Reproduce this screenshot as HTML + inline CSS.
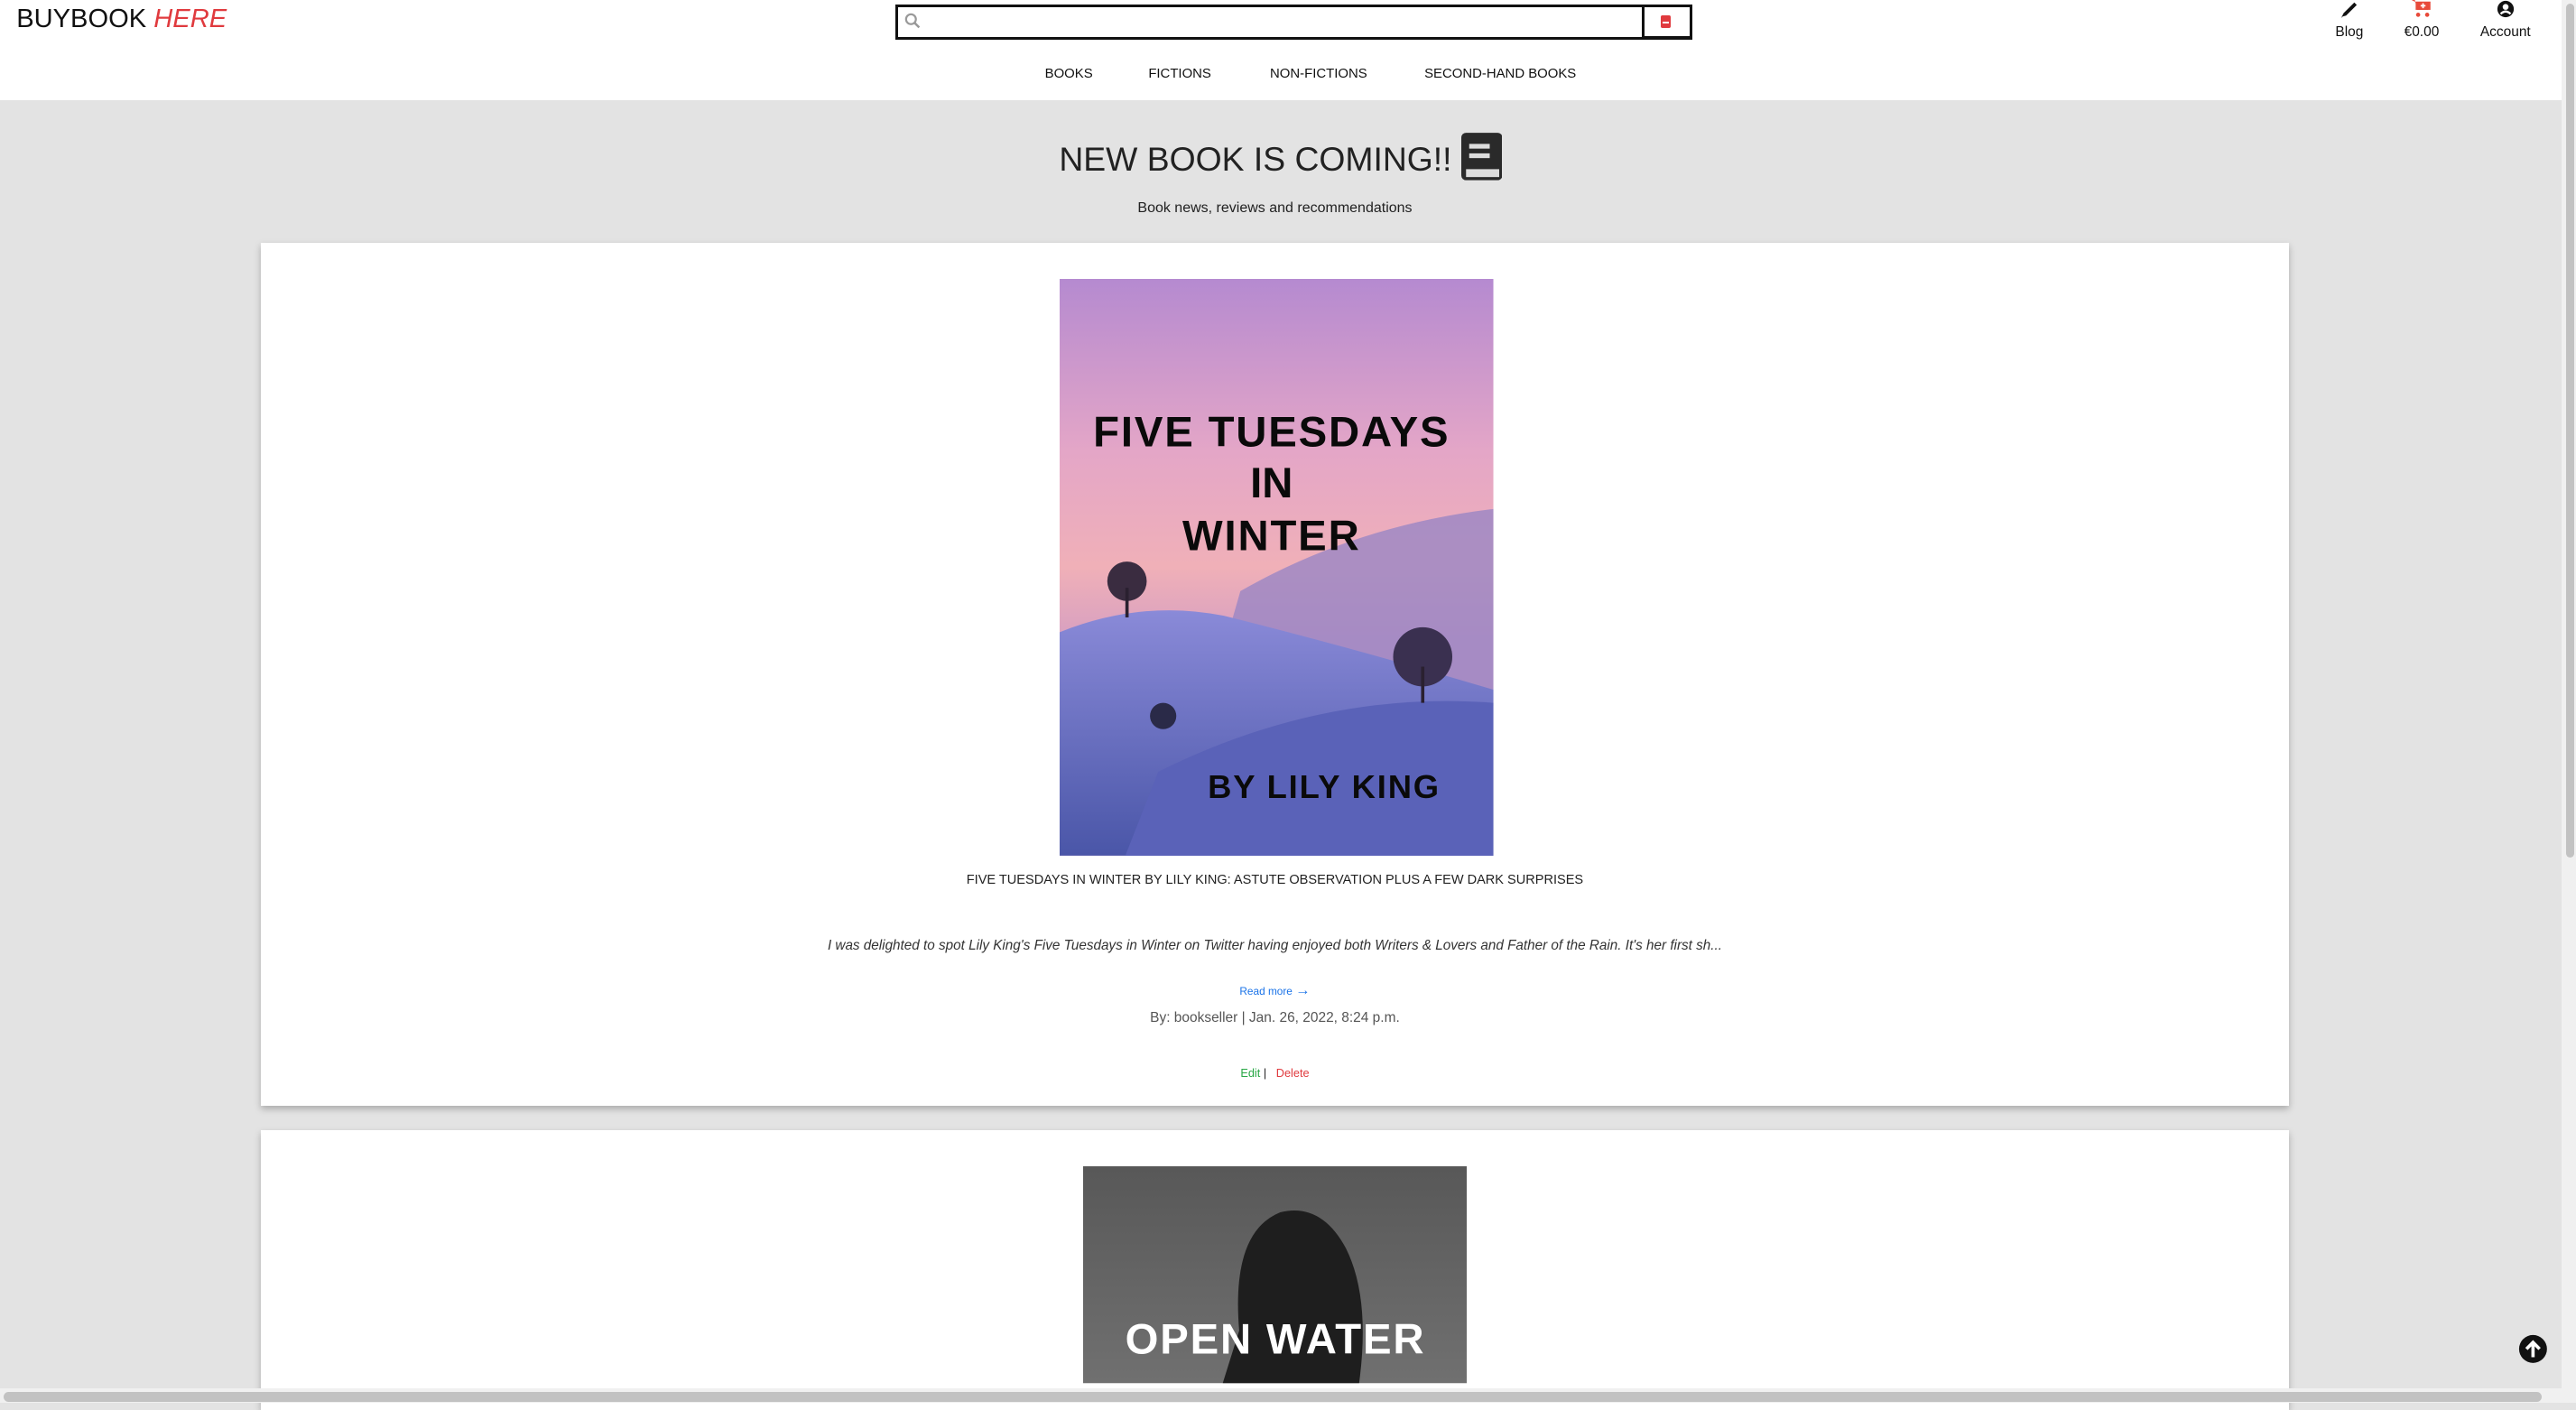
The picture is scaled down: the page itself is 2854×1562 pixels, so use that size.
<!DOCTYPE html>
<html><head><meta charset="utf-8">
<style>
html{zoom:1.8202}
*{box-sizing:border-box;margin:0;padding:0}
body{width:1568px;height:854px;overflow:hidden;background:#e3e3e3;font-family:"Liberation Sans",Arial,sans-serif;position:relative;color:#222}
.abs{position:absolute}
header{position:absolute;left:0;top:0;width:1559px;height:61px;background:#fff}
.logo{left:10px;top:3px;font-size:16px;color:#111}
.logo i{color:#e03a3e}
.search{left:545px;top:3px;width:485px;height:21px;border:2px solid #111;background:#fff}
.search .btn{position:absolute;right:0;top:-2px;width:29px;height:21px;border:2px solid #111;border-right:none}
.nav{top:40px;font-size:8.2px;color:#111}
.ico{top:0;font-size:8.5px;text-align:center;color:#111}
.title{left:0;width:1559px;top:81px;text-align:center;font-size:20.5px;color:#222}
.sub{left:0;width:1552px;top:122px;text-align:center;font-size:8.8px;color:#222}
.card{background:#fff;box-shadow:0 2px 4px rgba(0,0,0,.25);left:159px;width:1234px}
.c{position:absolute;left:0;width:100%;text-align:center}
</style></head><body>
<header>
<div class="abs logo">BUYBOOK <i>HERE</i></div>
<div class="abs search">
<svg class="abs" style="left:4px;top:3px" width="10" height="10" viewBox="0 0 10 10"><circle cx="4" cy="4" r="3" fill="none" stroke="#999" stroke-width="1.2"/><line x1="6" y1="6" x2="9" y2="9" stroke="#999" stroke-width="1.4"/></svg>
<div class="btn"><div style="position:absolute;left:10px;top:5px;width:6px;height:8px;background:#e03a3e;border-radius:1px"></div><div style="position:absolute;left:11px;top:9px;width:4px;height:1px;background:#fff"></div></div>
</div>
<div class="abs nav" style="left:636px">BOOKS</div>
<div class="abs nav" style="left:699px">FICTIONS</div>
<div class="abs nav" style="left:773px">NON-FICTIONS</div>
<div class="abs nav" style="left:867px">SECOND-HAND BOOKS</div>
<div class="abs ico" style="left:1419px;width:22px"><svg width="12" height="11" viewBox="0 0 12 11"><path d="M2 10 L1 11 L2.5 8 L9 1.5 L10.5 3 L4 9.5Z" fill="#111"/></svg><div style="margin-top:1px">Blog</div></div>
<div class="abs ico" style="left:1460px;width:28px"><svg width="14" height="11" viewBox="0 0 14 11"><path d="M1 0H3L4.5 6H11L12.5 1H3" fill="#e84a3a"/><rect x="3.5" y="1" width="9" height="5" fill="#e84a3a"/><circle cx="5" cy="9" r="1.3" fill="#e84a3a"/><circle cx="10.5" cy="9" r="1.3" fill="#e84a3a"/><path d="M8 2v3M6.5 3.5h3" stroke="#fff" stroke-width="1"/></svg><div style="margin-top:1px">€0.00</div></div>
<div class="abs ico" style="left:1507px;width:36px"><svg width="11" height="11" viewBox="0 0 11 11"><circle cx="5.5" cy="5.5" r="5" fill="#111"/><circle cx="5.5" cy="4.2" r="1.8" fill="#fff"/><path d="M2.5 8.5Q5.5 5.5 8.5 8.5" stroke="#fff" stroke-width="1.3" fill="none"/></svg><div style="margin-top:1px">Account</div></div>
</header>
<div class="abs" style="left:1559px;top:0;width:9px;height:854px;background:#f0f0f0"></div>
<div class="abs" style="left:1562px;top:2px;width:5px;height:520px;background:#c2c2c2;border-radius:3px"></div>
<div class="abs title">NEW BOOK IS COMING!! <svg style="vertical-align:-6px" width="25" height="29" viewBox="0 0 26 30"><rect x="0" y="0" width="26" height="30" rx="3" fill="#2a2a2a"/><rect x="5" y="7" width="13" height="3" fill="#ddd"/><rect x="5" y="13" width="13" height="3" fill="#ddd"/><rect x="3" y="23" width="21" height="5" fill="#ddd"/></svg></div>
<div class="abs sub">Book news, reviews and recommendations</div>

<div class="abs card" style="top:148px;height:525px">
<svg class="abs" style="left:486px;top:22px" width="264" height="351" viewBox="0 0 264 351">
<defs><linearGradient id="sk" x1="0" y1="0" x2="0" y2="1"><stop offset="0" stop-color="#b58ad0"/><stop offset=".3" stop-color="#e4a6c7"/><stop offset=".5" stop-color="#f0b0b8"/><stop offset=".62" stop-color="#d8a0c0"/></linearGradient>
<linearGradient id="hl" x1="0" y1="0" x2="0" y2="1"><stop offset="0" stop-color="#8a8ad8"/><stop offset="1" stop-color="#4a56a8"/></linearGradient></defs>
<rect width="264" height="351" fill="url(#sk)"/>
<path d="M110 190 Q180 150 264 140 L264 260 L90 260Z" fill="#9a86c4" opacity=".8"/>
<path d="M0 215 Q50 195 100 205 Q180 225 264 250 L264 351 L0 351Z" fill="url(#hl)"/>
<path d="M60 300 Q160 250 264 258 L264 351 L40 351Z" fill="#5a62b8"/>
<circle cx="41" cy="184" r="12" fill="#3a2c40"/><rect x="40" y="188" width="2" height="18" fill="#2a2030"/>
<circle cx="221" cy="230" r="18" fill="#3a3050"/><rect x="220" y="236" width="2" height="22" fill="#2a2030"/>
<circle cx="63" cy="266" r="8" fill="#2a2a48"/>
<g font-family="'Liberation Sans',Arial,sans-serif" font-weight="900" fill="#0a0a0a" text-anchor="middle" font-size="26">
<text x="129" y="102" letter-spacing="1">FIVE TUESDAYS</text><text x="129" y="133">IN</text><text x="129" y="165" letter-spacing="1">WINTER</text>
<text x="161" y="316" font-size="20" letter-spacing="1">BY LILY KING</text></g>
</svg>
<div class="c" style="top:383px;font-size:8px;color:#222">FIVE TUESDAYS IN WINTER BY LILY KING: ASTUTE OBSERVATION PLUS A FEW DARK SURPRISES</div>
<div class="c" style="top:423px;font-size:8.4px;font-style:italic;color:#333">I was delighted to spot Lily King's Five Tuesdays in Winter on Twitter having enjoyed both Writers &amp; Lovers and Father of the Rain. It's her first sh...</div>
<div class="c" style="top:450px;font-size:6.5px;color:#1a73e8">Read more <b style="font-size:9px">→</b></div>
<div class="c" style="top:467px;font-size:8.5px;color:#555">By: bookseller | Jan. 26, 2022, 8:24 p.m.</div>
<div class="c" style="top:501px;font-size:7px"><span style="color:#28a745">Edit</span> | &nbsp;&nbsp;<span style="color:#e03a3e">Delete</span></div>
</div>

<div class="abs card" style="top:688px;height:170px">
<svg class="abs" style="left:500px;top:22px" width="234" height="132" viewBox="0 0 234 132">
<defs><linearGradient id="g2" x1="0" y1="0" x2="0" y2="1"><stop offset="0" stop-color="#585858"/><stop offset="1" stop-color="#707070"/></linearGradient></defs>
<rect width="234" height="132" fill="url(#g2)"/>
<path d="M95 100 Q90 40 120 28 Q145 22 160 50 Q175 80 168 132 L85 132Z" fill="#1e1e1e"/>
<text x="117" y="114" text-anchor="middle" font-family="'Liberation Sans',Arial,sans-serif" font-weight="900" font-size="26" fill="#fff" letter-spacing="1">OPEN WATER</text>
</svg>
</div>
<div class="abs" style="left:0;top:845px;width:1568px;height:9px;background:#f0f0f0"></div>
<div class="abs" style="left:2px;top:847px;width:1545px;height:6px;background:#c2c2c2;border-radius:3px"></div>
<svg class="abs" style="left:1533px;top:812px" width="18" height="18" viewBox="0 0 18 18"><circle cx="9" cy="9" r="8.5" fill="#111"/><path d="M9 14V5M5 9L9 5L13 9" stroke="#fff" stroke-width="2" fill="none"/></svg>
</body></html>
